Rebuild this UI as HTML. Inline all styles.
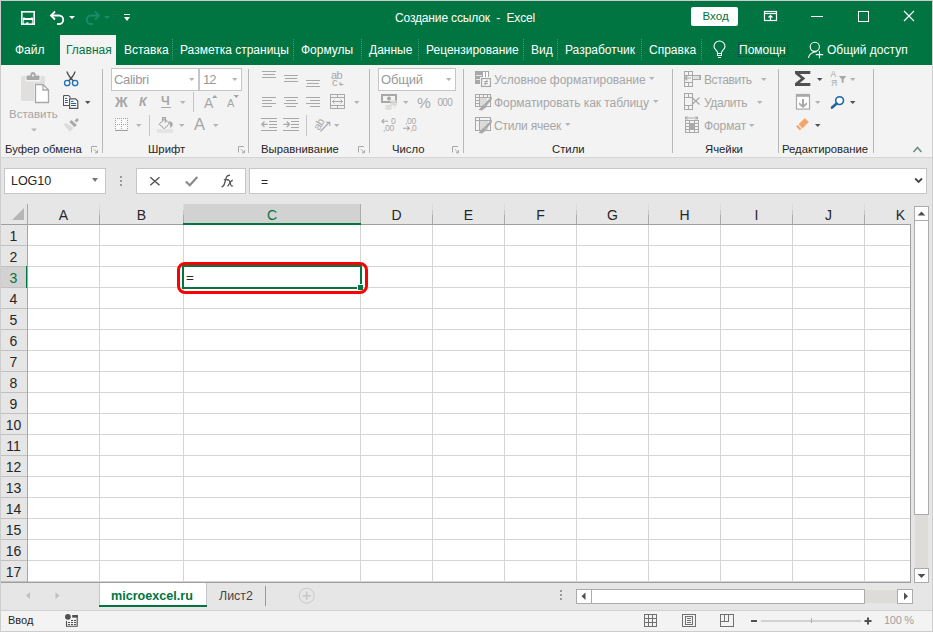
<!DOCTYPE html>
<html><head><meta charset="utf-8">
<style>
*{box-sizing:border-box;margin:0;padding:0}
html,body{width:933px;height:632px;overflow:hidden;background:#f3f3f3;font-family:"Liberation Sans",sans-serif}
.a{position:absolute}
.t{position:absolute;white-space:nowrap;line-height:1}
#win{position:absolute;left:0;top:0;width:933px;height:632px;overflow:hidden}
.g{background:#007542}
.w{color:#fff}
.rl{color:#262626;font-size:11.3px}
.dim{color:#a6a6a6}
.sep{position:absolute;width:1px;background:#b8b8b8}
.dd{position:absolute;width:0;height:0;border-left:3px solid transparent;border-right:3px solid transparent;border-top:3px solid #a6a6a6}
.ddk{border-top-color:#444}
.hdr{position:absolute;top:204px;height:20px;background:#e6e6e6;font-size:13px;color:#262626;text-align:center;line-height:20px}
.rh{position:absolute;left:1px;width:26px;height:21px;font-size:13px;color:#262626;line-height:21px;text-align:center;background:#e6e6e6}
</style></head><body>
<div id="win">
<!-- window border -->
<div class="a" style="left:0;top:0;width:933px;height:632px;border:1px solid #cdcdcd;z-index:50;pointer-events:none"></div>

<!-- title bar + tab row -->
<div class="a g" style="left:1px;top:1px;width:931px;height:64px"></div>

<!-- save icon -->
<svg class="a" style="left:18px;top:8px" width="20" height="20" viewBox="18 8 20 20">
 <rect x="21.8" y="11.8" width="12.4" height="12.4" fill="none" stroke="#fff" stroke-width="1.6"/>
 <rect x="23" y="18" width="10" height="2" fill="#fff"/>
 <path d="M23.5 17L24.5 18M32.5 17L31.5 18" stroke="#fff" stroke-width="0.8"/>
 <path d="M23.6 20V24M32.4 20V24" stroke="#fff" stroke-width="0.8"/>
 <rect x="26.2" y="22.3" width="2.2" height="2" fill="#fff"/>
</svg>
<!-- undo -->
<svg class="a" style="left:49px;top:10px" width="17" height="16" viewBox="0 0 17 16">
 <path d="M2 5.5h8a4 4 0 0 1 0 8.5h-2" fill="none" stroke="#fff" stroke-width="1.8"/>
 <path d="M6 1.5L2 5.5L6 9.5" fill="none" stroke="#fff" stroke-width="1.8"/>
</svg>
<div class="dd" style="left:69px;top:16px;border-top-color:#fff"></div>
<!-- redo dim -->
<svg class="a" style="left:84px;top:10px" width="17" height="16" viewBox="0 0 17 16">
 <path d="M15 5.5h-8a4 4 0 0 0 0 8.5h2" fill="none" stroke="#168e68" stroke-width="1.8"/>
 <path d="M11 1.5L15 5.5L11 9.5" fill="none" stroke="#168e68" stroke-width="1.8"/>
</svg>
<div class="dd" style="left:104px;top:16px;border-top-color:#168e68"></div>
<!-- customize -->
<div class="a" style="left:124px;top:14px;width:6px;height:1px;background:#fff"></div>
<div class="dd" style="left:124px;top:17px;border-top-color:#fff;border-left-width:3px;border-right-width:3px;border-top-width:4px"></div>

<div class="t w" style="left:395px;top:12px;font-size:12px;letter-spacing:-0.15px">Создание ссылок&nbsp; -&nbsp; Excel</div>

<!-- Вход -->
<div class="a" style="left:691px;top:7px;width:47px;height:19px;background:#fff;border-radius:2px"></div>
<div class="t" style="left:702.5px;top:10px;font-size:11.6px;color:#007542">Вход</div>
<!-- ribbon display options -->
<svg class="a" style="left:763px;top:10px" width="15" height="12" viewBox="0 0 15 12">
 <rect x="1.5" y="1.5" width="12" height="9" fill="none" stroke="#fff" stroke-width="1.2"/>
 <path d="M1.5 3.5h12" stroke="#fff" stroke-width="1.2"/>
 <path d="M7.5 10.5v-5M5.5 7.5l2-2l2 2" fill="none" stroke="#fff" stroke-width="1.2"/>
</svg>
<div class="a" style="left:811px;top:16px;width:12px;height:1px;background:#fff"></div>
<div class="a" style="left:858px;top:11px;width:11px;height:11px;border:1px solid #fff"></div>
<svg class="a" style="left:903px;top:10px" width="12" height="12" viewBox="0 0 12 12">
 <path d="M1 1L11 11M11 1L1 11" stroke="#fff" stroke-width="1.2"/>
</svg>

<!-- tabs -->
<div class="a" style="left:60px;top:35px;width:56px;height:30px;background:#f3f3f3"></div>
<div class="t w" style="left:15px;top:43.5px;font-size:12px">Файл</div>
<div class="t" style="left:66px;top:43.5px;font-size:12px;color:#007542">Главная</div>
<div class="t w" style="left:124px;top:43.5px;font-size:12px">Вставка</div>
<div class="t w" style="left:180px;top:43.5px;font-size:12px">Разметка страницы</div>
<div class="t w" style="left:301px;top:43.5px;font-size:12px">Формулы</div>
<div class="t w" style="left:369px;top:43.5px;font-size:12px">Данные</div>
<div class="t w" style="left:426px;top:43.5px;font-size:12px">Рецензирование</div>
<div class="t w" style="left:531px;top:43.5px;font-size:12px">Вид</div>
<div class="t w" style="left:565px;top:43.5px;font-size:12px">Разработчик</div>
<div class="t w" style="left:649px;top:43.5px;font-size:12px">Справка</div>
<div class="t w" style="left:739px;top:43.5px;font-size:12px">Помощн</div>
<div class="t w" style="left:827px;top:43.5px;font-size:12px">Общий доступ</div>

<div class="a" style="left:172px;top:39px;width:1px;height:21px;background:repeating-linear-gradient(to bottom,#3f9c7e 0 1px,transparent 1px 2px)"></div><div class="a" style="left:293px;top:39px;width:1px;height:21px;background:repeating-linear-gradient(to bottom,#3f9c7e 0 1px,transparent 1px 2px)"></div><div class="a" style="left:361px;top:39px;width:1px;height:21px;background:repeating-linear-gradient(to bottom,#3f9c7e 0 1px,transparent 1px 2px)"></div><div class="a" style="left:418px;top:39px;width:1px;height:21px;background:repeating-linear-gradient(to bottom,#3f9c7e 0 1px,transparent 1px 2px)"></div><div class="a" style="left:523px;top:39px;width:1px;height:21px;background:repeating-linear-gradient(to bottom,#3f9c7e 0 1px,transparent 1px 2px)"></div><div class="a" style="left:557px;top:39px;width:1px;height:21px;background:repeating-linear-gradient(to bottom,#3f9c7e 0 1px,transparent 1px 2px)"></div><div class="a" style="left:641px;top:39px;width:1px;height:21px;background:repeating-linear-gradient(to bottom,#3f9c7e 0 1px,transparent 1px 2px)"></div><div class="a" style="left:701px;top:39px;width:1px;height:21px;background:repeating-linear-gradient(to bottom,#3f9c7e 0 1px,transparent 1px 2px)"></div>
<svg class="a" style="left:706px;top:38px" width="124" height="24" viewBox="706 38 124 24">
 <path d="M717.5 53.5V52.5C717.5 50.5 714 49.5 714 46.5A5.5 5.5 0 0 1 725 46.5C725 49.5 721.5 50.5 721.5 52.5V53.5Z" fill="none" stroke="#fff" stroke-width="1.1"/>
 <rect x="717.5" y="53.5" width="4" height="2" fill="none" stroke="#fff" stroke-width="1"/>
 <rect x="718" y="57" width="3" height="1" fill="#fff"/>
 <circle cx="814.8" cy="46.8" r="4.6" fill="none" stroke="#fff" stroke-width="1.1"/>
 <path d="M808.3 57.8C809.5 54 812 52 816.5 51.8" fill="none" stroke="#fff" stroke-width="1.1"/>
 <path d="M815.8 54.6H823.2M819.5 50.9V58.3" stroke="#fff" stroke-width="1.1"/>
</svg>
<div class="a" style="left:738px;top:42px;width:50px;height:15px;border:1px dotted #17385a"></div>

<!-- ribbon -->
<div class="a" style="left:1px;top:157px;width:931px;height:1px;background:#d5d5d5"></div>
<div class="a" style="left:1px;top:158px;width:931px;height:473px;background:#e6e6e6"></div>


<!-- clipboard group -->
<svg class="a" style="left:0;top:64px" width="102" height="94" viewBox="0 64 102 94">
 <rect x="21" y="76" width="24" height="25" rx="1.5" fill="#e1dfdd"/>
 <rect x="25.5" y="75" width="15" height="6.5" fill="#f3f3f3"/>
 <rect x="26.5" y="75.5" width="13" height="4.5" rx="1" fill="#a8a8a8"/>
 <circle cx="33" cy="74.5" r="2.6" fill="#a8a8a8"/>
 <circle cx="33" cy="75.5" r="1" fill="#fff"/>
 <path d="M34 83.5H44L50 89.5V103.5H34Z" fill="#f3f3f3"/>
 <path d="M35.5 84.5H43L48.5 90V102.5H35.5Z" fill="#fff" stroke="#a8a8a8" stroke-width="1.3"/>
 <path d="M43 84.5V90H48.5" fill="none" stroke="#a8a8a8" stroke-width="1.3"/>
 <!-- scissors -->
 <path d="M67 71.5C67.5 75 70 77 71 78.5L73.5 81M75 71.5C74.5 75 72 77 71 78.5L68.5 81" fill="none" stroke="#505050" stroke-width="1.5"/>
 <circle cx="67.2" cy="83" r="2.7" fill="none" stroke="#1e6fb5" stroke-width="1.3"/>
 <circle cx="75.1" cy="83" r="2.7" fill="none" stroke="#1e6fb5" stroke-width="1.3"/>
 <!-- copy -->
 <path d="M63.6 95.6H68.5L70.5 97.6" fill="none" stroke="#555" stroke-width="1.2"/>
 <path d="M63.6 95.6V105.5H69" fill="#fff" stroke="#555" stroke-width="1.2"/>
 <rect x="64.3" y="96.3" width="4.5" height="8.6" fill="#fff"/>
 <path d="M69.6 98.8H75.5L77.8 101.1V108.3H69.6Z" fill="#fff" stroke="#555" stroke-width="1.2"/>
 <path d="M65 98.4h2.2M65 100.5h2.8M65 102.5h2.8" stroke="#1e5fa0" stroke-width="1"/>
 <path d="M71 101.4h2.5M71 103.5h5.2M71 105.5h5.2" stroke="#1e5fa0" stroke-width="1"/>
 <path d="M85 101H90.5L87.75 104Z" fill="#505050"/>
 <!-- format painter -->
 <path d="M77.1 118L79 119.9L76.4 122.5L74.6 120.6Z" fill="#aaa"/>
 <path d="M71.5 120.1L76.9 125.1L74.6 127.2L69.2 121.9Z" fill="#aaa"/>
 <path d="M66.3 123L73.4 127.9L69.9 131.8L63.3 124.3Z" fill="#dcdbd8"/>
 <!-- paste dropdown -->
 <path d="M31 128.5H37L34 131.5Z" fill="#b4b4b4"/>
 <!-- launcher -->
 <path d="M91.5 152.5V146.5H97" fill="none" stroke="#a8a8a8" stroke-width="1"/>
 <path d="M94 149.3L97.3 152.6M97.5 150.2V152.8H95" fill="none" stroke="#a8a8a8" stroke-width="1"/>
</svg>
<div class="t dim" style="left:9px;top:109px;font-size:11.5px">Вставить</div>


<!-- font group -->
<div class="a" style="left:111px;top:68px;width:88px;height:23px;background:#fff;border:1px solid #c6c6c6"></div>
<div class="a" style="left:199px;top:68px;width:43px;height:23px;background:#fff;border:1px solid #c6c6c6"></div>
<div class="t" style="left:114px;top:73px;font-size:13px;letter-spacing:-0.3px;color:#999">Calibri</div>
<div class="t" style="left:203px;top:73px;font-size:13px;letter-spacing:-1px;color:#999">12</div>
<svg class="a" style="left:100px;top:64px" width="150" height="94" viewBox="100 64 150 94">
 <g fill="#b4b4b4">
 <path d="M189 78H194.5L191.75 81Z"/>
 <path d="M232 78H237.5L234.75 81Z"/>
 <path d="M180 101H185.5L182.75 104Z"/>
 <path d="M136 124H141.5L138.75 127Z"/>
 <path d="M179 124H184.5L181.75 127Z"/>
 <path d="M213 124H218.5L215.75 127Z"/>
 <path d="M212 98H217.5L214.75 95Z" fill="#a6a6a6"/>
 <path d="M233.5 95H239L236.25 98Z" fill="#a6a6a6"/>
 </g>
 <rect x="193" y="92" width="1" height="20" fill="#c6c6c6"/>
 <rect x="149" y="115" width="1" height="21" fill="#c6c6c6"/>
 <path d="M161 107.5H171" stroke="#a6a6a6" stroke-width="1"/>
 <!-- borders icon -->
 <rect x="115" y="118" width="13" height="11" fill="#fbfbfb"/>
 <g fill="#a0a0a0" shape-rendering="crispEdges"><rect x="115" y="118" width="1" height="1"/><rect x="117" y="118" width="1" height="1"/><rect x="119" y="118" width="1" height="1"/><rect x="121" y="118" width="1" height="1"/><rect x="123" y="118" width="1" height="1"/><rect x="125" y="118" width="1" height="1"/><rect x="127" y="118" width="1" height="1"/><rect x="115" y="120" width="1" height="1"/><rect x="121" y="120" width="1" height="1"/><rect x="127" y="120" width="1" height="1"/><rect x="115" y="122" width="1" height="1"/><rect x="121" y="122" width="1" height="1"/><rect x="127" y="122" width="1" height="1"/><rect x="115" y="124" width="1" height="1"/><rect x="117" y="124" width="1" height="1"/><rect x="119" y="124" width="1" height="1"/><rect x="121" y="124" width="1" height="1"/><rect x="123" y="124" width="1" height="1"/><rect x="125" y="124" width="1" height="1"/><rect x="127" y="124" width="1" height="1"/><rect x="115" y="126" width="1" height="1"/><rect x="121" y="126" width="1" height="1"/><rect x="127" y="126" width="1" height="1"/><rect x="115" y="128" width="1" height="1"/><rect x="121" y="128" width="1" height="1"/><rect x="127" y="128" width="1" height="1"/><rect x="115" y="130" width="13" height="1"/></g>
 <!-- fill bucket -->
 <path d="M164.8 118.9L169.5 123.6L164.3 128.6L159.2 124.3Z" fill="none" stroke="#a6a6a6" stroke-width="1.2" stroke-dasharray="1.6 0.6"/>
 <path d="M162.6 120.8V117.6H165.4V122.6" fill="none" stroke="#a6a6a6" stroke-width="1.3"/>
 <path d="M169 121.3C171 121.5 173 122.5 172.8 124.5C172.6 126 171.5 127 170.6 128.3L169.8 123.5Z" fill="#a6a6a6"/>
 <rect x="157" y="129" width="16" height="4" fill="#e4e4e4"/>
 <path d="M238.5 152.5V146.5H244" fill="none" stroke="#a8a8a8" stroke-width="1"/>
 <path d="M241 149.3L244.3 152.6M244.5 150.2V152.8H242" fill="none" stroke="#a8a8a8" stroke-width="1"/>
</svg>
<div class="t" style="left:115px;top:95px;font-size:14px;font-weight:bold;color:#a6a6a6">Ж</div>
<div class="t" style="left:139px;top:96px;font-size:12.5px;font-weight:bold;font-style:italic;color:#a6a6a6">К</div>
<div class="t" style="left:161px;top:95px;font-size:12.5px;font-weight:bold;color:#a6a6a6">Ч</div>
<div class="t" style="left:204px;top:96px;font-size:14px;color:#a6a6a6">A</div>
<div class="t" style="left:227px;top:98px;font-size:11px;color:#a6a6a6">A</div>
<div class="t" style="left:194px;top:116px;font-size:16.5px;color:#a6a6a6">A</div>


<!-- alignment group -->
<svg class="a" style="left:250px;top:64px" width="120" height="94" viewBox="250 64 120 94">
 <g fill="#a8a8a8" shape-rendering="crispEdges">
 <rect x="262" y="71" width="14" height="1"/>
 <rect x="263" y="74" width="12" height="1"/>
 <rect x="262" y="77" width="14" height="1"/>
 <rect x="284" y="75" width="14" height="1"/>
 <rect x="285" y="78" width="12" height="1"/>
 <rect x="284" y="81" width="14" height="1"/>
 <rect x="306" y="80" width="14" height="1"/>
 <rect x="307" y="83" width="12" height="1"/>
 <rect x="306" y="86" width="14" height="1"/>
 <rect x="262" y="97" width="14" height="1"/>
 <rect x="262" y="100" width="10" height="1"/>
 <rect x="262" y="103" width="14" height="1"/>
 <rect x="262" y="106" width="10" height="1"/>
 <rect x="284" y="97" width="14" height="1"/>
 <rect x="286" y="100" width="10" height="1"/>
 <rect x="284" y="103" width="14" height="1"/>
 <rect x="286" y="106" width="10" height="1"/>
 <rect x="306" y="97" width="14" height="1"/>
 <rect x="310" y="100" width="10" height="1"/>
 <rect x="306" y="103" width="14" height="1"/>
 <rect x="310" y="106" width="10" height="1"/>
 <rect x="261" y="118" width="16" height="1"/>
 <rect x="269" y="121" width="8" height="1"/>
 <rect x="269" y="124" width="8" height="1"/>
 <rect x="269" y="127" width="8" height="1"/>
 <rect x="261" y="130" width="16" height="1"/>
 <rect x="283" y="118" width="16" height="1"/>
 <rect x="291" y="121" width="8" height="1"/>
 <rect x="291" y="124" width="8" height="1"/>
 <rect x="291" y="127" width="8" height="1"/>
 <rect x="283" y="130" width="16" height="1"/>
 <rect x="306" y="115" width="1" height="21" fill="#c6c6c6"/>
 </g>
 <g fill="none" stroke="#a8a8a8" stroke-width="1.3">
 <path d="M267.5 124.3H261.8M264.5 121.5L261.8 124.3L264.5 127.1"/>
 <path d="M283.5 124.3H289.5M286.8 121.5L289.5 124.3L286.8 127.1"/>
 </g>
 <!-- merge -->
 <g fill="none" stroke="#a8a8a8" stroke-width="1" shape-rendering="crispEdges">
 <rect x="330.5" y="94.5" width="14" height="14"/>
 <path d="M331 97.5H344M331 105.5H344M337.5 95V97M337.5 106V108"/>
 </g>
 <path d="M332.5 101.5H342.5M334.5 99.5L332.5 101.5L334.5 103.5M340.5 99.5L342.5 101.5L340.5 103.5" fill="none" stroke="#a8a8a8" stroke-width="1"/>
 <path d="M354 101H359.5L356.75 104Z" fill="#b4b4b4"/>
 <!-- wrap -->
 <path d="M340 82V84.5H343.5M341.5 83L340 84.5L341.5 86" fill="none" stroke="#a8a8a8" stroke-width="0.9"/>
 <!-- orientation arrow -->
 <path d="M320.5 131.5L329.5 122M326 122.2H329.8V126" fill="none" stroke="#a8a8a8" stroke-width="1.1"/>
 <path d="M334 124H339.5L336.75 127Z" fill="#b4b4b4"/>
 <!-- launcher -->
 <path d="M358.5 152.5V146.5H364" fill="none" stroke="#a8a8a8" stroke-width="1"/>
 <path d="M361 149.3L364.3 152.6M364.5 150.2V152.8H362" fill="none" stroke="#a8a8a8" stroke-width="1"/>
</svg>
<div class="t" style="left:331px;top:70px;font-size:11px;color:#a8a8a8;letter-spacing:-0.5px">ab</div>
<div class="t" style="left:332px;top:77px;font-size:11px;color:#a8a8a8">c</div>
<div class="t" style="left:314px;top:117px;font-size:11px;color:#a8a8a8;transform:rotate(-60deg);transform-origin:7px 7px;letter-spacing:-0.5px">ab</div>


<!-- number group -->
<div class="a" style="left:378px;top:68px;width:78px;height:23px;background:#fff;border:1px solid #c6c6c6"></div>
<div class="t" style="left:381px;top:73px;font-size:13px;letter-spacing:-0.2px;color:#999">Общий</div>
<svg class="a" style="left:370px;top:64px" width="94" height="94" viewBox="370 64 94 94">
 <path d="M446 78H451.5L448.75 81Z" fill="#b4b4b4"/>
 <path d="M403 101H408.5L405.75 104Z" fill="#b4b4b4"/>
 <!-- bill -->
 <path d="M381 94H397V103H381Z M383 96V101H395V96Z" fill="#a8a8a8" fill-rule="evenodd"/>
 <circle cx="389" cy="98.5" r="2" fill="#a8a8a8"/>
 <ellipse cx="393.5" cy="101.5" rx="3.5" ry="1.3" fill="#dcdbd7"/>
 <ellipse cx="393.5" cy="104" rx="3.5" ry="1.2" fill="#dcdbd7"/>
 <ellipse cx="388.5" cy="106" rx="3.5" ry="1.3" fill="#dcdbd7"/>
 <ellipse cx="388.5" cy="108.5" rx="3.5" ry="1.2" fill="#dcdbd7"/>
 <path d="M393 105.5h4M393 107h3" stroke="#dcdbd7" stroke-width="0.8"/>
 <!-- arrows in decimal icons -->
 <path d="M388 121.3H381.8M384 119.2L381.8 121.3L384 123.4" fill="none" stroke="#a8a8a8" stroke-width="1.1"/>
 <path d="M403 128.3H409.5M407.2 126.2L409.5 128.3L407.2 130.4" fill="none" stroke="#a8a8a8" stroke-width="1.1"/>
 <!-- launcher -->
 <path d="M452.5 152.5V146.5H458" fill="none" stroke="#a8a8a8" stroke-width="1"/>
 <path d="M455 149.3L458.3 152.6M458.5 150.2V152.8H456" fill="none" stroke="#a8a8a8" stroke-width="1"/>
</svg>
<div class="t" style="left:417px;top:95px;font-size:15.5px;color:#a8a8a8">%</div>
<div class="t" style="left:437.5px;top:97.5px;font-size:10px;letter-spacing:-0.7px;color:#a8a8a8">000</div>
<div class="t" style="left:391px;top:117px;font-size:8.5px;color:#a8a8a8">0</div>
<div class="t" style="left:383px;top:124px;font-size:8.5px;letter-spacing:-0.3px;color:#a8a8a8">,00</div>
<div class="t" style="left:405px;top:117px;font-size:8.5px;letter-spacing:-0.3px;color:#a8a8a8">,00</div>
<div class="t" style="left:410px;top:124px;font-size:8.5px;letter-spacing:-0.3px;color:#a8a8a8">,0</div>


<!-- styles group -->
<svg class="a" style="left:464px;top:64px" width="208" height="94" viewBox="464 64 208 94">
 <g fill="none" stroke="#a8a8a8" stroke-width="1" shape-rendering="crispEdges">
  <!-- icon1 -->
 </g>
 <rect x="475" y="71" width="7" height="13" fill="#a8a8a8"/>
 <rect x="476" y="75" width="6" height="1" fill="#e8e8e8"/>
 <rect x="476" y="79" width="5" height="1" fill="#e8e8e8"/>
 <rect x="482.5" y="71.5" width="6" height="6" fill="#fff" stroke="#a8a8a8" stroke-width="1" shape-rendering="crispEdges"/>
 <rect x="485" y="72" width="1" height="5" fill="#a8a8a8"/>
 <rect x="480" y="77" width="12" height="11" fill="#f3f3f3"/>
 <rect x="481.6" y="78.6" width="8.8" height="7.8" fill="#fff" stroke="#a8a8a8" stroke-width="1.3"/>
 <path d="M483.8 81.5h4.4M483.8 83.6h4.4M487.2 79.8L484.8 85.3" stroke="#9a9a9a" stroke-width="0.9"/>
 <!-- icon2 -->
 <g fill="none" stroke="#a8a8a8" stroke-width="1" shape-rendering="crispEdges">
  <rect x="475.5" y="94.5" width="15" height="12"/>
  <path d="M476 97.5H490M476 100.5H484M476 103.5H481M479.5 95V106M483.5 95V101M487.5 95V97"/>
  <rect x="475.5" y="117.5" width="15" height="13"/>
  <path d="M476 120.5H490M479.5 118V130"/>
 </g>
 <rect x="480" y="98" width="7" height="8" fill="#dcdbd7"/>
 <rect x="480" y="121" width="8" height="9" fill="#dcdbd7"/>
 <g>
  <path d="M491.5 96.5L484 104.5L486 106.5L492 99Z" fill="#a8a8a8"/>
  <path d="M483.5 104.5L486.5 107L482 110.5L478.5 110Z" fill="#a8a8a8"/>
  <path d="M491.5 119.5L484 127.5L486 129.5L492 122Z" fill="#a8a8a8"/>
  <path d="M483.5 127.5L486.5 130L482 133.5L478.5 133Z" fill="#a8a8a8"/>
 </g>
 <path d="M649 77H654.5L651.75 80Z" fill="#b4b4b4"/>
 <path d="M653 100H658.5L655.75 103Z" fill="#b4b4b4"/>
 <path d="M565 123H570.5L567.75 126Z" fill="#b4b4b4"/>
</svg>
<div class="t dim" style="left:494px;top:73.5px;font-size:12px;letter-spacing:-0.05px">Условное форматирование</div>
<div class="t dim" style="left:494px;top:96.5px;font-size:12px;letter-spacing:-0.05px">Форматировать как таблицу</div>
<div class="t dim" style="left:494px;top:119.5px;font-size:12px;letter-spacing:-0.2px">Стили ячеек</div>


<!-- cells group -->
<svg class="a" style="left:673px;top:64px" width="105" height="94" viewBox="673 64 105 94">
 <g fill="none" stroke="#a8a8a8" stroke-width="1.2" shape-rendering="crispEdges">
  <rect x="684.5" y="71.5" width="8" height="15"/>
  <path d="M684.5 75.5H692.5M684.5 82.5H692.5M688.5 71.5V75.5M688.5 82.5V86.5"/>
  <rect x="692.5" y="75.5" width="7.5" height="4"/>
  <rect x="684.5" y="93.5" width="8" height="16"/>
  <path d="M684.5 97.5H692.5M684.5 105.5H692.5M688.5 93.5V97.5M688.5 105.5V109.5"/>
  <rect x="685.5" y="120.5" width="13" height="12"/>
  <path d="M685.5 123.5H698.5M685.5 126.5H698.5M685.5 129.5H698.5M689.5 120.5V132.5M694.5 120.5V132.5"/>
 </g>
 <rect x="693.5" y="76.5" width="6" height="2" fill="#dcdbd7"/>
 <rect x="690" y="124" width="4" height="5" fill="#a8a8a8"/>
 <path d="M691 78H685M687.3 75.8L685 78L687.3 80.2" fill="none" stroke="#a8a8a8" stroke-width="1.2"/>
 <path d="M692 97.5L699.5 104.5M699.5 97.5L692 104.5" stroke="#a8a8a8" stroke-width="1.2"/>
 <path d="M685.5 118H697.5M685.5 116.5V119.5M697.5 116.5V119.5M687.5 116.5L685.5 118L687.5 119.5M695.5 116.5L697.5 118L695.5 119.5" fill="none" stroke="#a8a8a8" stroke-width="1"/>
 <path d="M761 78H766.5L763.75 81Z" fill="#b4b4b4"/>
 <path d="M757 101H762.5L759.75 104Z" fill="#b4b4b4"/>
 <path d="M749 124H754.5L751.75 127Z" fill="#b4b4b4"/>
</svg>
<div class="t dim" style="left:704px;top:73.5px;font-size:12px;letter-spacing:-0.4px">Вставить</div>
<div class="t dim" style="left:704px;top:96.5px;font-size:12px;letter-spacing:-0.4px">Удалить</div>
<div class="t dim" style="left:704px;top:119.5px;font-size:12px;letter-spacing:-0.1px">Формат</div>


<!-- editing group -->
<svg class="a" style="left:779px;top:64px" width="153" height="94" viewBox="779 64 153 94">
 <path d="M795 71H810.3V74H799.8L805.3 78.5L799.8 83H810.3V86H795V83.3L801 78.5L795 73.7Z" fill="#505050"/>
 <path d="M817 78H822.5L819.75 81Z" fill="#505050"/>
 <path d="M839 76H846.3L843.6 79.5V82.8H841.7V79.5Z" fill="#a8a8a8"/>
 <path d="M850 78H855.5L852.75 81Z" fill="#b4b4b4"/>
 <!-- fill -->
 <rect x="796.5" y="94.5" width="13" height="14.6" fill="#fff" stroke="#a8a8a8" stroke-width="1.2"/>
 <rect x="796.5" y="94.5" width="13" height="2.3" fill="#a8a8a8"/>
 <rect x="802" y="99" width="2" height="7" fill="#a8a8a8"/>
 <path d="M799 102.3L803 105.6L807 102.3V104.6L803 108L799 104.6Z" fill="#a8a8a8"/>
 <path d="M815 101H820.5L817.75 104Z" fill="#b4b4b4"/>
 <!-- find -->
 <circle cx="839.6" cy="100.6" r="3.9" fill="#fff" stroke="#1a66a8" stroke-width="1.6"/>
 <path d="M836.7 103.6L832 107.6" stroke="#1a66a8" stroke-width="2.6" stroke-linecap="round"/>
 <path d="M850 101H855.5L852.75 104Z" fill="#505050"/>
 <!-- clear -->
 <path d="M804.8 118.6L808.4 122L802.4 127.9L799 124.3Z" fill="#f4a46a" stroke="#f4a46a" stroke-width="0.8" stroke-linejoin="round"/>
 <path d="M797.5 125.2L801 128.8L799.8 129.9L796.6 126.5Z" fill="#f4a46a" stroke="#f4a46a" stroke-width="0.8" stroke-linejoin="round"/>
 <path d="M815 124H820.5L817.75 127Z" fill="#505050"/>
 <!-- collapse ribbon -->
 <path d="M913.5 152L917.5 147.5L921.5 152" fill="none" stroke="#6a8f83" stroke-width="1.6"/>
</svg>
<div class="t" style="left:830.5px;top:69.5px;font-size:8.5px;color:#a8a8a8">A</div>
<div class="t" style="left:831px;top:79px;font-size:8.5px;color:#a8a8a8">Я</div>

<!-- group labels -->
<div class="t rl" style="left:5px;top:144px">Буфер обмена</div>
<div class="t rl" style="left:148px;top:144px">Шрифт</div>
<div class="t rl" style="left:261px;top:144px">Выравнивание</div>
<div class="t rl" style="left:392px;top:144px">Число</div>
<div class="t rl" style="left:552px;top:144px">Стили</div>
<div class="t rl" style="left:705px;top:144px">Ячейки</div>
<div class="t rl" style="left:782px;top:144px">Редактирование</div>
<div class="sep" style="left:102px;top:69px;height:84px"></div>
<div class="sep" style="left:248px;top:69px;height:84px"></div>
<div class="sep" style="left:369px;top:69px;height:84px"></div>
<div class="sep" style="left:463px;top:69px;height:84px"></div>
<div class="sep" style="left:672px;top:69px;height:84px"></div>
<div class="sep" style="left:778px;top:69px;height:84px"></div>
<div class="sep" style="left:873px;top:69px;height:84px"></div>

<!-- formula bar -->
<div class="a" style="left:4px;top:168px;width:102px;height:26px;background:#fff;border:1px solid #c6c6c6"></div>
<div class="t" style="left:11px;top:175px;font-size:12.6px;letter-spacing:-0.1px;color:#262626">LOG10</div>
<div class="dd ddk" style="left:92px;top:178px;border-top-color:#777;border-left-width:3.5px;border-right-width:3.5px;border-top-width:4px"></div>
<div class="a" style="left:136px;top:168px;width:110px;height:26px;background:#fff;border:1px solid #c6c6c6"></div>
<div class="a" style="left:249px;top:168px;width:678px;height:26px;background:#fff;border:1px solid #c6c6c6"></div>
<div class="t" style="left:261px;top:176px;font-size:12px;color:#262626">=</div>


<svg class="a" style="left:100px;top:160px" width="833" height="40" viewBox="100 160 833 40">
 <rect x="120" y="176" width="2" height="2" fill="#9a9a9a"/>
 <rect x="120" y="180" width="2" height="2" fill="#9a9a9a"/>
 <rect x="120" y="184" width="2" height="2" fill="#9a9a9a"/>
 <path d="M150.3 177.3L159.5 185.2M159.5 177.3L150.3 185.2" stroke="#555" stroke-width="1.5"/>
 <path d="M185.8 181.5L189.8 185.3L197.3 177" fill="none" stroke="#8a8a8a" stroke-width="2.2"/>
 <path d="M915.2 178.5L918.6 181.9L922 178.5" fill="none" stroke="#444" stroke-width="1.8"/>
</svg>
<svg class="a" style="left:218px;top:172px" width="18" height="18" viewBox="218 172 18 18">
 <path d="M221.5 186.8C223.5 186.8 224.2 185 224.8 182.5L226.3 177.5C226.9 175.7 228 175 230 175.3" fill="none" stroke="#555" stroke-width="1.3"/>
 <path d="M223.8 179.6H228.6" stroke="#555" stroke-width="1.1"/>
 <path d="M227 180.2C228.6 179.6 229.4 180.3 229.9 182L230.7 184.6C231.2 186.2 232 186.5 233 185.6" fill="none" stroke="#555" stroke-width="1.2"/>
 <path d="M232.8 180.2C231.6 180.5 230.4 182 229.6 183.4L227.6 186.4" fill="none" stroke="#555" stroke-width="1.2"/>
</svg>

<!-- grid -->
<svg class="a" style="left:0;top:0" width="933" height="632" viewBox="0 0 933 632" shape-rendering="crispEdges">
<rect x="28" y="225" width="882" height="357" fill="#fff"/>
<rect x="99" y="225" width="1" height="356" fill="#d4d4d4"/>
<rect x="183" y="225" width="1" height="356" fill="#d4d4d4"/>
<rect x="360" y="225" width="1" height="356" fill="#d4d4d4"/>
<rect x="432" y="225" width="1" height="356" fill="#d4d4d4"/>
<rect x="504" y="225" width="1" height="356" fill="#d4d4d4"/>
<rect x="576" y="225" width="1" height="356" fill="#d4d4d4"/>
<rect x="648" y="225" width="1" height="356" fill="#d4d4d4"/>
<rect x="720" y="225" width="1" height="356" fill="#d4d4d4"/>
<rect x="792" y="225" width="1" height="356" fill="#d4d4d4"/>
<rect x="864" y="225" width="1" height="356" fill="#d4d4d4"/>
<rect x="28" y="245" width="882" height="1" fill="#d4d4d4"/>
<rect x="1" y="245" width="26" height="1" fill="#c0c0c0"/>
<rect x="28" y="266" width="882" height="1" fill="#d4d4d4"/>
<rect x="1" y="266" width="26" height="1" fill="#c0c0c0"/>
<rect x="28" y="287" width="882" height="1" fill="#d4d4d4"/>
<rect x="1" y="287" width="26" height="1" fill="#c0c0c0"/>
<rect x="28" y="308" width="882" height="1" fill="#d4d4d4"/>
<rect x="1" y="308" width="26" height="1" fill="#c0c0c0"/>
<rect x="28" y="329" width="882" height="1" fill="#d4d4d4"/>
<rect x="1" y="329" width="26" height="1" fill="#c0c0c0"/>
<rect x="28" y="350" width="882" height="1" fill="#d4d4d4"/>
<rect x="1" y="350" width="26" height="1" fill="#c0c0c0"/>
<rect x="28" y="371" width="882" height="1" fill="#d4d4d4"/>
<rect x="1" y="371" width="26" height="1" fill="#c0c0c0"/>
<rect x="28" y="392" width="882" height="1" fill="#d4d4d4"/>
<rect x="1" y="392" width="26" height="1" fill="#c0c0c0"/>
<rect x="28" y="413" width="882" height="1" fill="#d4d4d4"/>
<rect x="1" y="413" width="26" height="1" fill="#c0c0c0"/>
<rect x="28" y="434" width="882" height="1" fill="#d4d4d4"/>
<rect x="1" y="434" width="26" height="1" fill="#c0c0c0"/>
<rect x="28" y="455" width="882" height="1" fill="#d4d4d4"/>
<rect x="1" y="455" width="26" height="1" fill="#c0c0c0"/>
<rect x="28" y="476" width="882" height="1" fill="#d4d4d4"/>
<rect x="1" y="476" width="26" height="1" fill="#c0c0c0"/>
<rect x="28" y="497" width="882" height="1" fill="#d4d4d4"/>
<rect x="1" y="497" width="26" height="1" fill="#c0c0c0"/>
<rect x="28" y="518" width="882" height="1" fill="#d4d4d4"/>
<rect x="1" y="518" width="26" height="1" fill="#c0c0c0"/>
<rect x="28" y="539" width="882" height="1" fill="#d4d4d4"/>
<rect x="1" y="539" width="26" height="1" fill="#c0c0c0"/>
<rect x="28" y="560" width="882" height="1" fill="#d4d4d4"/>
<rect x="1" y="560" width="26" height="1" fill="#c0c0c0"/>
<rect x="99" y="204" width="1" height="6" fill="#dcdcdc"/><rect x="99" y="210" width="1" height="5" fill="#c6c6c6"/><rect x="99" y="215" width="1" height="9" fill="#ababab"/>


<rect x="432" y="204" width="1" height="6" fill="#dcdcdc"/><rect x="432" y="210" width="1" height="5" fill="#c6c6c6"/><rect x="432" y="215" width="1" height="9" fill="#ababab"/>
<rect x="504" y="204" width="1" height="6" fill="#dcdcdc"/><rect x="504" y="210" width="1" height="5" fill="#c6c6c6"/><rect x="504" y="215" width="1" height="9" fill="#ababab"/>
<rect x="576" y="204" width="1" height="6" fill="#dcdcdc"/><rect x="576" y="210" width="1" height="5" fill="#c6c6c6"/><rect x="576" y="215" width="1" height="9" fill="#ababab"/>
<rect x="648" y="204" width="1" height="6" fill="#dcdcdc"/><rect x="648" y="210" width="1" height="5" fill="#c6c6c6"/><rect x="648" y="215" width="1" height="9" fill="#ababab"/>
<rect x="720" y="204" width="1" height="6" fill="#dcdcdc"/><rect x="720" y="210" width="1" height="5" fill="#c6c6c6"/><rect x="720" y="215" width="1" height="9" fill="#ababab"/>
<rect x="792" y="204" width="1" height="6" fill="#dcdcdc"/><rect x="792" y="210" width="1" height="5" fill="#c6c6c6"/><rect x="792" y="215" width="1" height="9" fill="#ababab"/>
<rect x="864" y="204" width="1" height="6" fill="#dcdcdc"/><rect x="864" y="210" width="1" height="5" fill="#c6c6c6"/><rect x="864" y="215" width="1" height="9" fill="#ababab"/>
<rect x="183" y="204" width="178" height="19" fill="#d2d2d2"/>
<rect x="183" y="223" width="178" height="2" fill="#007542"/>
<rect x="183" y="204" width="1" height="6" fill="#dcdcdc"/><rect x="183" y="210" width="1" height="5" fill="#c6c6c6"/><rect x="183" y="215" width="1" height="8" fill="#ababab"/>
<rect x="360" y="204" width="1" height="19" fill="#ababab"/>
<rect x="1" y="267" width="26" height="20" fill="#d2d2d2"/>
<rect x="26" y="266" width="2" height="22" fill="#007542"/>
<rect x="1" y="224" width="182" height="1" fill="#9e9e9e"/>
<rect x="361" y="224" width="550" height="1" fill="#9e9e9e"/>
<rect x="27" y="204" width="1" height="379" fill="#a6a6a6"/>
<rect x="28" y="581" width="882" height="1" fill="#d4d4d4"/><rect x="1" y="581" width="26" height="1" fill="#c0c0c0"/><rect x="1" y="582" width="910" height="1" fill="#9e9e9e"/>
<rect x="910" y="224" width="1" height="359" fill="#a0a0a0"/>
<path d="M12 220L24 208V220Z" fill="#b5b5b5" shape-rendering="auto"/>
</svg>
<div class="t" style="left:28px;width:71px;top:208px;text-align:center;font-size:14px;color:#262626">A</div>
<div class="t" style="left:100px;width:83px;top:208px;text-align:center;font-size:14px;color:#262626">B</div>
<div class="t" style="left:184px;width:176px;top:208px;text-align:center;font-size:14px;color:#007542">C</div>
<div class="t" style="left:361px;width:71px;top:208px;text-align:center;font-size:14px;color:#262626">D</div>
<div class="t" style="left:433px;width:71px;top:208px;text-align:center;font-size:14px;color:#262626">E</div>
<div class="t" style="left:505px;width:71px;top:208px;text-align:center;font-size:14px;color:#262626">F</div>
<div class="t" style="left:577px;width:71px;top:208px;text-align:center;font-size:14px;color:#262626">G</div>
<div class="t" style="left:649px;width:71px;top:208px;text-align:center;font-size:14px;color:#262626">H</div>
<div class="t" style="left:721px;width:71px;top:208px;text-align:center;font-size:14px;color:#262626">I</div>
<div class="t" style="left:793px;width:71px;top:208px;text-align:center;font-size:14px;color:#262626">J</div>
<div class="t" style="left:865px;width:71px;top:208px;text-align:center;font-size:14px;color:#262626">K</div>
<div class="t" style="left:0.5px;width:26px;top:229px;text-align:center;font-size:14px;color:#262626">1</div>
<div class="t" style="left:0.5px;width:26px;top:250px;text-align:center;font-size:14px;color:#262626">2</div>
<div class="t" style="left:0.5px;width:26px;top:271px;text-align:center;font-size:14px;color:#007542">3</div>
<div class="t" style="left:0.5px;width:26px;top:292px;text-align:center;font-size:14px;color:#262626">4</div>
<div class="t" style="left:0.5px;width:26px;top:313px;text-align:center;font-size:14px;color:#262626">5</div>
<div class="t" style="left:0.5px;width:26px;top:334px;text-align:center;font-size:14px;color:#262626">6</div>
<div class="t" style="left:0.5px;width:26px;top:355px;text-align:center;font-size:14px;color:#262626">7</div>
<div class="t" style="left:0.5px;width:26px;top:376px;text-align:center;font-size:14px;color:#262626">8</div>
<div class="t" style="left:0.5px;width:26px;top:397px;text-align:center;font-size:14px;color:#262626">9</div>
<div class="t" style="left:0.5px;width:26px;top:418px;text-align:center;font-size:14px;color:#262626">10</div>
<div class="t" style="left:0.5px;width:26px;top:439px;text-align:center;font-size:14px;color:#262626">11</div>
<div class="t" style="left:0.5px;width:26px;top:460px;text-align:center;font-size:14px;color:#262626">12</div>
<div class="t" style="left:0.5px;width:26px;top:481px;text-align:center;font-size:14px;color:#262626">13</div>
<div class="t" style="left:0.5px;width:26px;top:502px;text-align:center;font-size:14px;color:#262626">14</div>
<div class="t" style="left:0.5px;width:26px;top:523px;text-align:center;font-size:14px;color:#262626">15</div>
<div class="t" style="left:0.5px;width:26px;top:544px;text-align:center;font-size:14px;color:#262626">16</div>
<div class="t" style="left:0.5px;width:26px;top:565px;text-align:center;font-size:14px;color:#262626">17</div>


<!-- selection -->
<svg class="a" style="left:170px;top:255px" width="210" height="45" viewBox="170 255 210 45">
 <g fill="#007542" shape-rendering="crispEdges">
  <rect x="182" y="265" width="179" height="2"/>
  <rect x="182" y="265" width="2" height="24"/>
  <rect x="182" y="287" width="175" height="2"/>
  <rect x="360" y="265" width="2" height="19"/>
  <rect x="358" y="285" width="5" height="5"/>
 </g>
 <rect x="357" y="284" width="1" height="6" fill="#fff"/>
 <rect x="358" y="284" width="5" height="1" fill="#fff"/>
 <rect x="178.5" y="263.5" width="188" height="29" rx="6.5" ry="6.5" fill="none" stroke="#ff0000" stroke-width="3"/>
</svg>
<div class="t" style="left:186px;top:271px;font-size:13.5px;color:#262626">=</div>

<!-- sheet bar -->
<div class="a" style="left:1px;top:610px;width:931px;height:1px;background:#d0d0d0"></div>
<div class="a" style="left:1px;top:611px;width:931px;height:20px;background:#f3f3f3"></div>
<div class="a" style="left:99px;top:583px;width:108px;height:24px;background:#fff;border-left:1px solid #c6c6c6;border-right:1px solid #c6c6c6"></div>
<div class="a" style="left:99px;top:605px;width:108px;height:2px;background:#007542"></div>
<div class="t" style="left:111px;top:590px;font-size:12.6px;font-weight:bold;color:#007542">microexcel.ru</div>
<div class="t" style="left:219px;top:590px;font-size:12.4px;color:#444">Лист2</div>
<svg class="a" style="left:0;top:582px" width="933" height="50" viewBox="0 582 933 50">
 <path d="M30 592.2V599L26 595.6Z" fill="#c0c0c0"/>
 <path d="M55.5 592.2V599L59.5 595.6Z" fill="#c0c0c0"/>
 <rect x="265" y="586" width="1" height="20" fill="#9a9a9a"/>
 <circle cx="306.7" cy="595.7" r="7.5" fill="none" stroke="#c8c8c8" stroke-width="1"/>
 <path d="M302.5 595.7H311M306.7 591.5V600" stroke="#c8c8c8" stroke-width="1.6"/>
 <g fill="#9a9a9a"><rect x="560" y="590" width="2" height="2"/><rect x="560" y="594" width="2" height="2"/><rect x="560" y="598" width="2" height="2"/></g>
 <!-- hscroll -->
 <rect x="576.5" y="589.5" width="15" height="14" fill="#fff" stroke="#ababab" stroke-width="1"/>
 <path d="M585.5 592.5V600L581.5 596.25Z" fill="#505050"/>
 <rect x="591.5" y="589.5" width="273" height="14" fill="#fff" stroke="#ababab" stroke-width="1"/>
 <rect x="865" y="590" width="32" height="13" fill="#dedcd9"/>
 <rect x="897.5" y="589.5" width="15" height="14" fill="#fff" stroke="#ababab" stroke-width="1"/>
 <path d="M904 592.5V600L908 596.25Z" fill="#505050"/>
 <!-- status bar -->
 <circle cx="67.9" cy="616.8" r="2.9" fill="#505050"/>
 <rect x="72.2" y="615" width="5.5" height="2.6" fill="#505050"/>
 <path d="M77.2 615V626.3H66.5V621" fill="none" stroke="#505050" stroke-width="1.1"/>
 <g fill="#505050"><rect x="71" y="620" width="2" height="1"/><rect x="74" y="620" width="2" height="1"/><rect x="68" y="622" width="2" height="1"/><rect x="71" y="622" width="2" height="1"/><rect x="74" y="622" width="2" height="1"/><rect x="68" y="624" width="2" height="1"/><rect x="71" y="624" width="2" height="1"/><rect x="74" y="624" width="2" height="1"/></g>
 <g fill="none" stroke="#707070" stroke-width="1" shape-rendering="crispEdges">
  <rect x="644.5" y="614.5" width="12" height="12"/>
  <path d="M648.5 615V626M652.5 615V626M645 618.5H656M645 622.5H656"/>
  <rect x="682.5" y="614.5" width="13" height="12"/>
  <rect x="685.5" y="616.5" width="7" height="8"/>
  <path d="M687 618.5H691M687 620.5H691M687 622.5H691"/>
  <path d="M720.5 626.5V614.5H733.5V626.5H720.5M721 621.5H728.5V615M724.5 615V621"/>
 </g>
 <rect x="751" y="620" width="6" height="2" fill="#505050"/>
 <rect x="761" y="620.5" width="100" height="1" fill="#b0b0b0"/>
 <rect x="811" y="618" width="1" height="5" fill="#b0b0b0"/>
 <path d="M864.5 620.9H871.5M868 617.4V624.4" stroke="#505050" stroke-width="2"/>
</svg>
<div class="t" style="left:8px;top:614.5px;font-size:11px;color:#262626">Ввод</div>
<div class="t" style="left:884px;top:615px;font-size:11px;color:#a0a0a0;letter-spacing:-0.3px">100 %</div>
<!-- vscroll -->
<svg class="a" style="left:911px;top:200px" width="22" height="390" viewBox="911 200 22 390">
 <rect x="914.5" y="206.5" width="14" height="14" fill="#fff" stroke="#ababab" stroke-width="1"/>
 <path d="M917.6 215.5H925.4L921.5 211.5Z" fill="#505050"/>
 <rect x="914.5" y="220.5" width="14" height="294" fill="#fff" stroke="#ababab" stroke-width="1"/>
 <rect x="915" y="515" width="13" height="53" fill="#dedcd9"/>
 <rect x="914.5" y="568.5" width="14" height="14" fill="#fff" stroke="#ababab" stroke-width="1"/>
 <path d="M917.6 574H925.4L921.5 578Z" fill="#505050"/>
</svg>

</div>
</body></html>
